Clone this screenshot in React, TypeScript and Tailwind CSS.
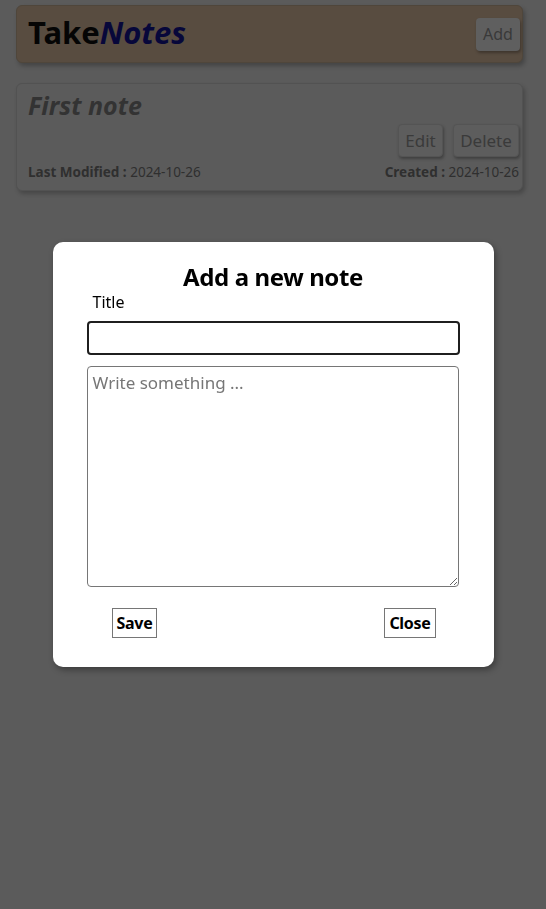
import React from "react";

export default function App() {
  const font = { fontFamily: '"Noto Sans", "Open Sans", sans-serif' };
  return (
    <div style={font} className="min-h-[909px] w-full bg-[#5b5b5b] relative">
      <div className="pl-4 pr-[23px] pt-[5px] flex flex-col gap-[20px]">
        <header className="h-[58px] rounded-[6px] border border-[#4f463b] bg-[#584c40] shadow-[2px_3px_4px_rgba(0,0,0,0.25)] flex items-center justify-between pl-[11px] pr-[2px]">
          <h1 className="text-[31px] font-bold leading-none tracking-[0px] mt-[-3px]">
            <span className="text-[#050505]">Take</span>
            <span className="italic text-[#07073a]">Notes</span>
          </h1>
          <button className="h-[33px] w-[44px] rounded-[4px] bg-[#5f5f5f] text-[#393939] text-[16px] shadow-[1px_2px_3px_rgba(0,0,0,0.3)]">
            Add
          </button>
        </header>
        <section className="h-[108px] rounded-[6px] border border-[#525252] bg-[#5b5b5b] shadow-[2px_3px_4px_rgba(0,0,0,0.22)] px-[11px] pt-[6px] flex flex-col">
          <h2 className="text-[25px] font-bold italic text-[#333333] leading-[31px]">First note</h2>
          <div className="flex justify-end gap-[10px] mt-[3px] mr-[-8px]">
            <button className="h-[33px] w-[45px] rounded-[4px] border border-[#545454] bg-[#5d5d5d] text-[#3a3a3a] text-[17px] shadow-[1px_2px_3px_rgba(0,0,0,0.3)]">
              Edit
            </button>
            <button className="h-[33px] w-[66px] rounded-[4px] border border-[#545454] bg-[#5d5d5d] text-[#3a3a3a] text-[17px] shadow-[1px_2px_3px_rgba(0,0,0,0.3)]">
              Delete
            </button>
          </div>
          <div className="flex justify-between text-[13.5px] text-[#2f2f2f] mt-[6px] mr-[-8px] leading-[18px]">
            <span>
              <b>Last Modified :</b> 2024-10-26
            </span>
            <span>
              <b>Created :</b> 2024-10-26
            </span>
          </div>
        </section>
      </div>

      <div className="fixed inset-0 flex items-center justify-center">
        <div className="w-[441px] h-[425px] bg-white rounded-[10px] shadow-[2px_3px_6px_rgba(0,0,0,0.35)] flex flex-col items-center pt-[19px]">
          <h2 className="text-[24px] font-bold text-black leading-[32px] tracking-[-0.4px]">Add a new note</h2>
          <div className="w-[373px] flex flex-col">
            <label className="ml-[6px] text-[16px] text-black leading-[20px] mt-[-1px]">Title</label>
            <input className="mt-[9px] h-[34px] w-[373px] rounded-[4px] border-2 border-[#1f1f1f] outline-none px-2" />
            <textarea
              placeholder="Write something ..."
              className="mt-[11px] h-[221px] w-[372px] rounded-[4px] border border-[#767676] px-[5px] py-[3px] text-[17px] placeholder:text-[#767676] outline-none"
            />
            <div className="flex justify-between mt-[21px] pl-[25px] pr-[24px]">
              <button className="h-[30px] px-[4px] border border-[#767676] bg-white text-black font-bold text-[16px] tracking-[-0.3px]">
                Save
              </button>
              <button className="h-[30px] px-[4px] border border-[#767676] bg-white text-black font-bold text-[16px] tracking-[-0.3px]">
                Close
              </button>
            </div>
          </div>
        </div>
      </div>
    </div>
  );
}
